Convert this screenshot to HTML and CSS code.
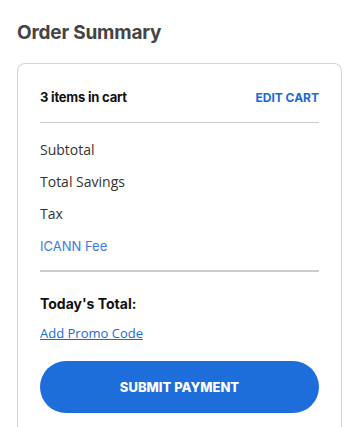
FILE: index.html
```html
<!DOCTYPE html>
<html lang="en">
<head>
  <meta charset="UTF-8">
  <meta name="viewport" content="width=device-width, initial-scale=1.0">
  <title>Order Summary</title>
  <link rel="stylesheet" href="styles.css">
</head>
<body>
  <div class="summary">
    <h2 class="summary-title">Order Summary</h2>
    <div class="card">
      <div class="cart-row">
        <span class="cart-count">3 items in cart</span>
        <a href="#" class="edit-cart">EDIT CART</a>
      </div>
      <ul class="lines">
        <li>Subtotal</li>
        <li>Total Savings</li>
        <li>Tax</li>
        <li class="fee">ICANN Fee</li>
      </ul>
      <div class="total">Today's Total:</div>
      <a href="#" class="promo">Add Promo Code</a>
      <button type="button" class="btn-submit">SUBMIT PAYMENT</button>
    </div>
  </div>
</body>
</html>
```

FILE: styles.css
```css
body {
  margin: 0;
  background: #fff;
  font-family: "Open Sans", Arial, sans-serif;
  color: #333;
}
.summary {
  padding: 21px 17px 0;
}
.summary-title {
  margin: 0 0 18px;
  font-family: Inter, Arial, sans-serif;
  font-size: 19px;
  font-weight: 700;
  line-height: 24px;
  color: #444;
  letter-spacing: -0.2px;
}
.card {
  border: 1px solid #d4d4dc;
  border-bottom: none;
  border-radius: 8px 8px 0 0;
  padding: 25px 22px 20px;
}
.cart-row {
  display: flex;
  justify-content: space-between;
  align-items: center;
  padding-bottom: 17px;
  border-bottom: 1px solid #ccc;
}
.cart-count {
  font-family: Inter, Arial, sans-serif;
  font-size: 13px;
  font-weight: 700;
  color: #111;
  letter-spacing: -0.2px;
}
.edit-cart {
  font-family: Inter, Arial, sans-serif;
  font-size: 12px;
  font-weight: 700;
  color: #1a6ad8;
  text-decoration: none;
}
.lines {
  list-style: none;
  margin: 0;
  padding: 11px 0 8px;
  border-bottom: 2px solid #ccc;
}
.lines li {
  font-size: 14px;
  line-height: 32px;
  color: #333;
}
.lines .fee {
  font-family: Inter, Arial, sans-serif;
  font-size: 13px;
  color: #3b7be0;
}
.total {
  margin-top: 23px;
  font-family: Inter, Arial, sans-serif;
  font-size: 14px;
  font-weight: 700;
  color: #111;
}
.promo {
  display: inline-block;
  margin-top: 12px;
  font-size: 13px;
  color: #1a6ad8;
}
.btn-submit {
  display: block;
  width: 100%;
  height: 52px;
  margin-top: 18px;
  border: none;
  border-radius: 26px;
  background: #1d6ddb;
  color: #fff;
  font-family: Inter, Arial, sans-serif;
  font-size: 13px;
  font-weight: 800;
  cursor: pointer;
}
```
